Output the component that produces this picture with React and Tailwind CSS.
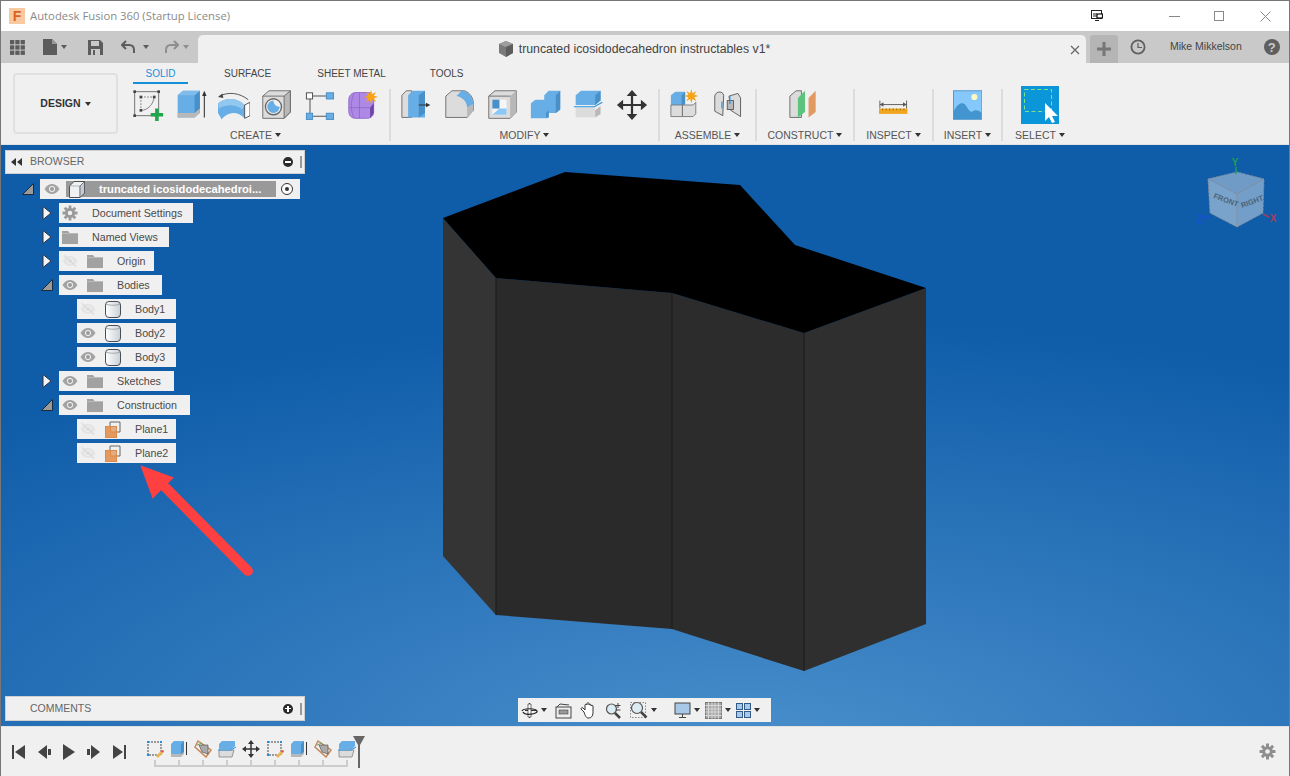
import React from 'react';

const Caret = ({ className = 'border-t-[#333]' }) => (
    <span className={`inline-block w-0 h-0 border-x-[3px] border-x-transparent border-t-[4px] ${className}`} />
);

const Eye = ({ off }) => (
    <svg width="16" height="12" viewBox="0 0 16 12" className="shrink-0">
        <path d="M0.500 6C3 2 5.500 1 8 1s5 1 7.500 5C13 10 10.500 11 8 11S3 10 0.500 6Z" fill={off ? '#e4e4e4' : '#a3a3a3'} />
        <circle cx="8" cy="6" r="3" fill="#f0f0f0" />
        <circle cx="8" cy="6" r="2" fill={off ? '#dcdcdc' : '#9a9a9a'} />
        {off && <path d="M2 0.500L14 11.500" stroke="#dcdcdc" strokeWidth="1.600" />}
    </svg>
);

const Folder = () => (
    <svg width="16" height="14" viewBox="0 0 16 14" className="shrink-0">
        <path d="M0 1h6l1.500 2H16v11H0Z" fill="#a2a2a2" />
        <path d="M0 3.500h16" stroke="#c4c4c4" strokeWidth="0.700" />
    </svg>
);

const Gear = ({ size = 16, color = '#9a9a9a' }) => (
    <svg width={size} height={size} viewBox="0 0 16 16" className="shrink-0">
        <path d="M8 3a5 5 0 1 0 0 10A5 5 0 0 0 8 3Zm0 2.800a2.200 2.200 0 1 1 0 4.400 2.200 2.200 0 0 1 0-4.400Z" fill={color} fillRule="evenodd" />
        <g stroke={color} strokeWidth="2.800">
            <path d="M8 0.500V4M8 12v3.500M0.500 8H4M12 8h3.500M2.700 2.700l2.500 2.500M10.800 10.800l2.500 2.500M13.300 2.700l-2.500 2.500M5.200 10.800l-2.500 2.500" />
        </g>
    </svg>
);

const BodyIcon = () => (
    <svg width="16" height="17" viewBox="0 0 16 17" className="shrink-0">
        <defs>
            <linearGradient id="cyl" x1="0" x2="1" y1="0" y2="0">
                <stop offset="0" stopColor="#ffffff" />
                <stop offset="1" stopColor="#c9d0d6" />
            </linearGradient>
        </defs>
        <rect x="0.500" y="0.500" width="15" height="16" rx="3.500" fill="url(#cyl)" stroke="#4a4f55" />
        <path d="M1 3.200c3 1.400 11 1.400 14 0" fill="none" stroke="#8a9097" strokeWidth="0.700" />
    </svg>
);

const PlaneIcon = () => (
    <svg width="16" height="17" viewBox="0 0 16 17" className="shrink-0">
        <path d="M5 5V1h10v10h-3" fill="none" stroke="#666" />
        <rect x="0.500" y="5.500" width="11" height="11" fill="#e0ab85" stroke="#dd8a4a" />
        <path d="M0.500 5.500h5v5.500h6v5.500h-11Z" fill="#e39a60" stroke="#dd8a4a" />
    </svg>
);

const RootCube = () => (
    <svg width="16" height="17" viewBox="0 0 16 17" className="shrink-0">
        <path d="M0.500 5L5 0.500h10.500V12L11 16.500H0.500Z" fill="#eef0f2" stroke="#4a4f55" />
        <path d="M0.500 5H11v11.500" fill="none" stroke="#9aa0a6" strokeWidth="0.700" />
        <path d="M11 5l4.500-4.500V12L11 16.500Z" fill="#c6ccd2" stroke="#4a4f55" strokeWidth="0.700" />
    </svg>
);

const Disclosure = ({ open }) => (
    <span className="w-[12px] h-[14px] flex items-center justify-center shrink-0">
        {open ? (
            <svg width="12" height="12" viewBox="0 0 12 12">
                <path d="M0.500 11.500L11.500 0.500V11.500Z" fill="#9a9a9a" stroke="#1c2a3a" />
            </svg>
        ) : (
            <svg width="10" height="14" viewBox="0 0 10 14">
                <path d="M1 0.500L9 7 1 13.500Z" fill="#f4f4f4" stroke="#2b3340" />
            </svg>
        )}
    </span>
);

const treeRows = [
    { label: 'Document Settings', indent: 'ml-[36px]', disc: 'closed', eye: null, icon: 'gear', width: 'w-[134px]' },
    { label: 'Named Views', indent: 'ml-[36px]', disc: 'closed', eye: null, icon: 'folder', width: 'w-[110px]' },
    { label: 'Origin', indent: 'ml-[36px]', disc: 'closed', eye: 'off', icon: 'folder', width: 'w-[95px]' },
    { label: 'Bodies', indent: 'ml-[36px]', disc: 'open', eye: 'on', icon: 'folder', width: 'w-[103px]' },
    { label: 'Body1', indent: 'ml-[72px]', disc: null, eye: 'off', icon: 'body', width: 'w-[99px]' },
    { label: 'Body2', indent: 'ml-[72px]', disc: null, eye: 'on', icon: 'body', width: 'w-[99px]' },
    { label: 'Body3', indent: 'ml-[72px]', disc: null, eye: 'on', icon: 'body', width: 'w-[99px]' },
    { label: 'Sketches', indent: 'ml-[36px]', disc: 'closed', eye: 'on', icon: 'folder', width: 'w-[115px]' },
    { label: 'Construction', indent: 'ml-[36px]', disc: 'open', eye: 'on', icon: 'folder', width: 'w-[131px]' },
    { label: 'Plane1', indent: 'ml-[72px]', disc: null, eye: 'off', icon: 'plane', width: 'w-[99px]' },
    { label: 'Plane2', indent: 'ml-[72px]', disc: null, eye: 'off', icon: 'plane', width: 'w-[99px]' },
];

const TreeRow = ({ row }) => (
    <div className={`flex items-center h-[20px] ${row.indent}`}>
        {row.disc && (
            <span className="w-[18px] -ml-[18px] flex justify-start">
                <Disclosure open={row.disc === 'open'} />
            </span>
        )}
        <div className={`flex items-center h-[20px] bg-[#f0f0f0] pl-[3px] ${row.width}`}>
            {row.eye && <span className="w-[25px] shrink-0"><Eye off={row.eye === 'off'} /></span>}
            <span className="w-[30px] shrink-0 flex">
                {row.icon === 'gear' && <Gear />}
                {row.icon === 'folder' && <Folder />}
                {row.icon === 'body' && <BodyIcon />}
                {row.icon === 'plane' && <PlaneIcon />}
            </span>
            <span className="text-[10.700px] text-[#4a4a4a] whitespace-nowrap">{row.label}</span>
        </div>
    </div>
);

const Sep = () => <div className="w-[2px] h-[52px] mt-[3px] bg-[#dcdcdc] shrink-0" />;

const Group = ({ label, width, children }) => (
    <div className={`flex flex-col items-center shrink-0 ${width}`}>
        <div className="flex items-center h-[38px] gap-[11px]">{children}</div>
        <div className="flex items-center gap-[3px] h-[14px] mt-[4px] text-[10.500px] text-[#555] leading-none whitespace-nowrap">
            {label} <Caret />
        </div>
    </div>
);

const Ico = ({ w = 36, children }) => (
    <svg width={(w * 8) / 9} height="32" viewBox={`0 0 ${w} 36`} className="shrink-0">{children}</svg>
);

const BLUE = '#68aee6';
const BLUE_D = '#4a90c8';
const GR = '#dcdcdc';
const GR_D = '#b8b8b8';

const SketchIcon = () => (
    <Ico>
        <path d="M3 3h27v27H3Z" fill="none" stroke="#666" />
        <path d="M10 9h15M10 9v15" stroke="#777" strokeDasharray="2 1.500" fill="none" />
        <path d="M10 24c8 0 14-7 15-15" fill="none" stroke="#777" />
        {[[3, 3], [30, 3], [3, 30], [10, 9], [25, 9], [10, 24]].map(([x, y]) => (
            <rect key={`${x}-${y}`} x={x - 1.500} y={y - 1.500} width="3" height="3" fill="#444" />
        ))}
        <path d="M21 27h5v-5h4v5h5v4h-5v5h-4v-5h-5Z" fill="#1fa64a" />
    </Ico>
);

const ExtrudeIcon = () => (
    <Ico>
        <path d="M3 7l6-5h19v25l-6 5H3Z" fill={BLUE} />
        <path d="M22 7l6-5v23l-6 6Z" fill={BLUE_D} />
        <path d="M3 7l6-5h19l-6 5Z" fill="#7fbcec" />
        <path d="M3 27h19l6-5v5l-6 5H3Z" fill={GR_D} />
        <path d="M33 32V4" stroke="#333" strokeWidth="1.200" />
        <path d="M30.500 8L33 2l2.500 6Z" fill="#333" />
    </Ico>
);

const RevolveIcon = () => (
    <Ico>
        <path d="M0 16C8 10 21 9 30 18V33C22 25 12 25 4 34L0 27Z" fill={BLUE} />
        <path d="M0 16C8 10 21 9 30 18L27 23C20 17 9 17 1 22Z" fill="#92c7f0" />
        <path d="M30 18L36 15V30L30 33Z" fill="#fff" stroke="#444" />
        <path d="M2 8C11 3 24 4 34 12" fill="none" stroke="#444" />
        <path d="M0 9L5 5 6 10Z" fill="#444" />
    </Ico>
);

const HoleIcon = () => (
    <Ico>
        <path d="M2 8l7-6h24v24l-7 7H2Z" fill={GR} stroke="#666" />
        <path d="M26 8l7-6v24l-7 7Z" fill={GR_D} stroke="#666" />
        <path d="M2 8h24" stroke="#666" />
        <circle cx="14" cy="20" r="9" fill="#f0f0f0" stroke="#666" strokeWidth="1.500" />
        <path d="M14 13a7 7 0 1 0 7 7c-4 0-7-3-7-7Z" fill={BLUE} />
    </Ico>
);

const BoxIcon = () => (
    <Ico>
        <g transform="translate(1 2) scale(1.150)">
            <path d="M8 5h14M5 8v14M8 25h14" stroke="#555" />
            <rect x="1.500" y="2" width="6" height="6" fill="#fff" stroke="#555" />
            <rect x="21" y="2" width="7" height="6" fill={BLUE} stroke="#4a90c8" />
            <rect x="1.500" y="22" width="6" height="6" fill={BLUE} stroke="#4a90c8" />
            <rect x="21" y="22" width="7" height="6" fill={BLUE} stroke="#4a90c8" />
        </g>
    </Ico>
);

const Star = ({ cx, cy, r = 7 }) => {
    const pts = [];
    for (let i = 0; i < 16; i++) {
        const rad = i % 2 === 0 ? r : r * 0.45;
        const a = (i * Math.PI) / 8;
        pts.push(`${(cx + Math.cos(a) * rad).toFixed(1)},${(cy + Math.sin(a) * rad).toFixed(1)}`);
    }
    return <polygon points={pts.join(' ')} fill="#f5a418" />;
};

const FormIcon = () => (
    <Ico>
        <path d="M2 12c0-5 4-8 8-8h14c4 0 6 4 6 8v14c0 5-4 7-8 7H10c-5 0-8-3-8-8Z" fill="#ad88e4" stroke="#8f66cc" />
        <path d="M2 21h24M14 5v28M8 5c-4 6-4 22 0 27" fill="none" stroke="#8a62c0" strokeWidth="0.800" />
        <path d="M30 16v11l-4 6v-12Z" fill="#6f44a8" />
        <Star cx={27} cy={9} r={8} />
    </Ico>
);

const PressPullIcon = () => (
    <Ico>
        <path d="M1 7l5-5h6v30H1Z" fill={GR} stroke="#666" />
        <path d="M8 7l5-5h14v30H8Z" fill={BLUE} />
        <path d="M20 7l7-5v25l-7 5Z" fill={BLUE_D} />
        <path d="M20 18h10" stroke="#333" strokeWidth="1.200" />
        <path d="M28 15.500l5 2.500-5 2.500Z" fill="#333" />
    </Ico>
);

const FilletIcon = () => (
    <Ico>
        <path d="M2 8l7-6h14c6 2 10 8 10 14v8l-7 8H2Z" fill={GR} stroke="#666" />
        <path d="M14 8l6-6h2c6 2 11 8 11 15l-7 4c0-6-5-12-12-13Z" fill={BLUE} />
        <path d="M26 21l7-4v8l-7 7Z" fill={GR_D} />
    </Ico>
);

const ShellIcon = () => (
    <Ico>
        <path d="M2 8l7-6h24v24l-7 7H2Z" fill={GR} stroke="#666" />
        <path d="M26 8l7-6v24l-7 7Z" fill={GR_D} />
        <path d="M2 8h24" stroke="#666" />
        <rect x="6" y="12" width="16" height="17" fill="#f6f6f6" />
        <path d="M6 12h8v10H6Z" fill={BLUE_D} />
        <path d="M14 22h8v7H6Z" fill="#8cc8f5" />
    </Ico>
);

const CombineIcon = () => (
    <Ico>
        <path d="M1 16l5-4h10V7l5-5h13v21l-5 4h-8v5l-2 1H1Z" fill={BLUE} />
        <path d="M29 7l5-5v21l-5 4ZM18 27l3-3v8h-3Z" fill={BLUE_D} />
    </Ico>
);

const SplitIcon = () => (
    <Ico>
        <path d="M3 7l6-5h22v11l-6 5H3Z" fill={BLUE} />
        <path d="M25 7l6-5v11l-6 5Z" fill={BLUE_D} />
        <path d="M3 21h22v11H3Z" fill={GR} />
        <path d="M25 24l6-5v9l-6 4Z" fill={GR_D} />
        <path d="M1 20h23l9-5" fill="none" stroke="#1e8fe0" strokeWidth="1.200" />
    </Ico>
);

const MoveIcon = () => (
    <Ico>
        <path d="M18 4v28M4 18h28" stroke="#333" strokeWidth="2.500" />
        <path d="M18 1l6 7H12ZM18 35l-6-7h12ZM1 18l7-6v12ZM35 18l-7 6V12Z" fill="#333" />
    </Ico>
);

const NewComponentIcon = () => (
    <Ico>
        <path d="M1 7l5-4h11v15H1Z" fill={BLUE} />
        <path d="M13 7l4-4v14l-4 1Z" fill={BLUE_D} />
        <path d="M1 18h13v13H1ZM14 18h12l3-3v13l-3 3H14Z" fill={GR} stroke="#777" />
        <Star cx={24} cy={8} r={8} />
    </Ico>
);

const JointIcon = () => (
    <Ico>
        <path d="M2 8c1-6 9-6 10-1l-1 23-9-5Z" fill={GR} stroke="#555" />
        <path d="M18 8l10-3 3 5v21l-11-7Z" fill={GR} stroke="#555" />
        <rect x="16" y="13" width="7" height="10" fill="#b8b8b8" stroke="#555" />
        <path d="M10 14v8M19 8v9" stroke="#1e8fe0" strokeWidth="1.200" />
    </Ico>
);

const ConstructIcon = () => (
    <Ico>
        <path d="M1 8l7-6h6v30H1Z" fill={GR} stroke="#666" />
        <path d="M10 10l8-8v24l-8 6Z" fill="#5cc47c" />
        <path d="M22 10l8-8v24l-8 6Z" fill="#e39a60" />
    </Ico>
);

const InspectIcon = () => (
    <Ico w={32}>
        <path d="M1 13v9M31 13v9" stroke="#555" />
        <path d="M1 17.500h30" stroke="#555" />
        <path d="M1 17.500l4-2.500v5ZM31 17.500l-4-2.500v5Z" fill="#555" />
        <rect x="0" y="22" width="32" height="6" fill="#f2a51e" />
        <path d="M4 22v2M8 22v2M12 22v2M16 22v2M20 22v2M24 22v2M28 22v2" stroke="#8a6510" />
    </Ico>
);

const InsertIcon = () => (
    <Ico w={33}>
        <rect x="0.500" y="2" width="32" height="32" fill="#85c8fb" stroke="#4a90c8" />
        <circle cx="24" cy="9" r="3.500" fill="#fdf7c4" />
        <path d="M1 34V25c4-9 10-11 13-7 2 3 4 7 7 8 3-3 8-3 11 1v7Z" fill="#4295cf" />
    </Ico>
);

const SelectIcon = () => (
    <svg width="38" height="38" viewBox="0 0 38 38" className="shrink-0">
        <rect width="38" height="38" fill="#0b96da" />
        <rect x="3.500" y="3.500" width="27" height="22" fill="none" stroke="#7ee08a" strokeDasharray="4 2.500" />
        <path d="M24 17v18l4-4 3 6 3-1-3-6h6Z" fill="#fff" />
    </svg>
);

const TlSketch = () => (
    <svg width="18" height="18" viewBox="0 0 18 18">
        <rect x="2" y="2" width="13" height="13" fill="none" stroke="#444" strokeDasharray="2 1" />
        <path d="M1 1h2v2H1ZM14 1h2v2h-2ZM1 14h2v2H1Z" fill="#1e8fe0" />
        <path d="M10 16l5-5 2 2-5 5Z" fill="#e8b54a" />
        <path d="M15 11l2 2 1-2-1-1Z" fill="#e64646" />
    </svg>
);
const TlExtrude = () => (
    <svg width="18" height="18" viewBox="0 0 18 18">
        <path d="M1 4l3-3h10v12l-3 3H1Z" fill={BLUE} />
        <path d="M11 4l3-3v12l-3 3Z" fill={BLUE_D} />
        <path d="M1 14h10l3-2v2l-3 3H1Z" fill={GR_D} />
        <path d="M16.500 15V2" stroke="#333" />
    </svg>
);
const TlFace = () => (
    <svg width="18" height="18" viewBox="0 0 18 18">
        <path d="M4 1l13 9-5 7L1 7Z" fill="#f0f0f0" stroke="#c8895a" strokeWidth="1.500" />
        <path d="M5 5l9 0 0 9-6-2Z" fill="#aaa" stroke="#444" strokeWidth="0.600" />
        <path d="M3 5l5-2" stroke="#4cb46a" />
    </svg>
);
const TlSplit = () => (
    <svg width="18" height="18" viewBox="0 0 18 18">
        <path d="M1 4l3-3h13v5l-3 3H1Z" fill={BLUE} />
        <path d="M1 10h15l-2 7H1Z" fill={GR} stroke="#777" strokeWidth="0.700" />
        <path d="M0 10h13l5-3" fill="none" stroke="#1e8fe0" />
    </svg>
);
const TlMove = () => (
    <svg width="18" height="18" viewBox="0 0 18 18">
        <path d="M9 2v14M2 9h14" stroke="#333" strokeWidth="1.500" />
        <path d="M9 0l3 4H6ZM9 18l-3-4h6ZM0 9l4-3v6ZM18 9l-4 3V6Z" fill="#333" />
    </svg>
);

const timeline = [TlSketch, TlExtrude, TlFace, TlSplit, TlMove, TlSketch, TlExtrude, TlFace, TlSplit];

const NavBtn = ({ children, caret }) => (
    <div className="flex items-center gap-[3px]">
        {children}
        {caret && <Caret />}
    </div>
);

const App = () => {
    return (
        <div
            className="w-[1290px] h-[776px] flex flex-col overflow-hidden border-x border-t border-[#777] bg-white"
            style={{ fontFamily: '"Liberation Sans", Arial, sans-serif' }}
        >
            {/* title bar */}
            <div className="h-[30px] shrink-0 bg-white flex items-center pl-[8px] relative">
                <div className="w-[16px] h-[16px] flex items-center justify-center bg-[#f9c9a0] text-[#d9641e] font-bold text-[14px] leading-none">
                    F
                </div>
                <span className="ml-[5px] text-[11.300px] text-[#8a8a8a] whitespace-nowrap" style={{ fontFamily: '"Open Sans", sans-serif' }}>
                    Autodesk Fusion 360 (Startup License)
                </span>
                <div className="ml-auto flex items-center">
                    <svg width="12" height="12" viewBox="0 0 12 12" className="mr-[66px]">
                        <rect x="0.500" y="0.500" width="10" height="8" fill="#fff" stroke="#222" />
                        <path d="M3 3v4M5 3v4" stroke="#222" />
                        <rect x="6" y="4" width="5.500" height="4" fill="#fff" stroke="#111" strokeWidth="1.200" />
                        <path d="M4 10.500h4" stroke="#222" />
                    </svg>
                    <span className="w-[11px] h-px bg-[#888] mr-[34px]" />
                    <span className="w-[10px] h-[10px] border border-[#888] mr-[36px]" />
                    <svg width="11" height="11" viewBox="0 0 11 11" className="mr-[18px]">
                        <path d="M0.500 0.500l10 10M10.500 0.500l-10 10" stroke="#888" />
                    </svg>
                </div>
            </div>

            {/* tab bar */}
            <div className="h-[32px] shrink-0 bg-[#c9c9c9] flex items-end">
                <div className="w-[197px] h-full flex items-center pl-[9px] shrink-0">
                    <svg width="15" height="15" viewBox="0 0 15 15" fill="#5c5c5c">
                        {[0, 5.300, 10.600].map((y) => [0, 5.300, 10.600].map((x) => (
                            <rect key={`${x}-${y}`} x={x} y={y} width="4.300" height="4.300" />
                        )))}
                    </svg>
                    <svg width="14" height="16" viewBox="0 0 14 16" className="ml-[18px]">
                        <path d="M0 0h9l5 5v11H0Z" fill="#5c5c5c" />
                        <path d="M9 0v5h5" fill="#999" />
                    </svg>
                    <span className="ml-[4px] flex"><Caret className="border-t-[#5c5c5c]" /></span>
                    <svg width="15" height="15" viewBox="0 0 15 15" className="ml-[21px]">
                        <path d="M0 0h12l3 3v12H0Z" fill="#5c5c5c" />
                        <rect x="3" y="1" width="8" height="5" fill="#c9c9c9" />
                        <rect x="3" y="9" width="9" height="6" fill="#c9c9c9" />
                        <rect x="5" y="10" width="2" height="5" fill="#5c5c5c" />
                    </svg>
                    <svg width="14" height="14" viewBox="0 0 14 14" className="ml-[18px]">
                        <path d="M5 1L1 5l4 4M1 5h7c3 0 5 2 5 5v3" fill="none" stroke="#5c5c5c" strokeWidth="2" />
                    </svg>
                    <span className="ml-[8px] flex"><Caret className="border-t-[#5c5c5c]" /></span>
                    <svg width="14" height="14" viewBox="0 0 14 14" className="ml-[16px]">
                        <path d="M9 1l4 4-4 4M13 5H6C3 5 1 7 1 10v3" fill="none" stroke="#8e8e8e" strokeWidth="2" />
                    </svg>
                    <span className="ml-[4px] flex"><Caret className="border-t-[#8e8e8e]" /></span>
                </div>
                <div className="w-[888px] h-[28px] shrink-0 bg-[#f0f0f0] rounded-t-[5px] flex items-center justify-center relative">
                    <svg width="16" height="16" viewBox="0 0 16 16" className="mr-[5px]">
                        <path d="M1 3l7-3 7 3v9l-7 4-7-4Z" fill="#7a7a7a" />
                        <path d="M1 3l7 3 7-3-7-3Z" fill="#9e9e9e" />
                        <path d="M8 6l7-3v9l-7 4Z" fill="#5d5d5d" />
                    </svg>
                    <span className="text-[12.300px] text-[#444] whitespace-nowrap pr-[16px]">truncated icosidodecahedron instructables v1*</span>
                    <svg width="10" height="10" viewBox="0 0 10 10" className="absolute right-[6px] top-[10px]">
                        <path d="M1 1l8 8M9 1l-8 8" stroke="#666" strokeWidth="1.200" />
                    </svg>
                </div>
                <div className="ml-[4px] w-[28px] h-[28px] rounded-t-[3px] bg-[#b5b5b5] flex items-center justify-center shrink-0">
                    <svg width="14" height="14" viewBox="0 0 14 14">
                        <path d="M7 0v14M0 7h14" stroke="#777" strokeWidth="3" />
                    </svg>
                </div>
                <div className="h-full flex items-center flex-1">
                    <svg width="16" height="16" viewBox="0 0 16 16" className="ml-[12px]">
                        <circle cx="8" cy="8" r="7.500" fill="#5f5f5f" />
                        <circle cx="8" cy="8" r="5.700" fill="#c9c9c9" />
                        <path d="M8 4v4.500h4" fill="none" stroke="#5f5f5f" strokeWidth="1.200" />
                    </svg>
                    <span className="ml-[24px] text-[10.500px] text-[#444] whitespace-nowrap">Mike Mikkelson</span>
                    <span className="ml-[22px] w-[16px] h-[16px] rounded-full bg-[#5f5f5f] text-[#c9c9c9] text-[13px] font-bold leading-none flex items-center justify-center">?</span>
                </div>
            </div>

            {/* ribbon */}
            <div className="h-[82px] shrink-0 bg-[#f0f0f0] flex border-b border-[#e2e2e2] pt-[10px]">
                <div className="ml-[12px] w-[105px] h-[61px] shrink-0 rounded-[4px] border-2 border-[#e0e0e0] flex items-center justify-center gap-[4px] text-[10.500px] font-bold text-[#333]">
                    DESIGN <Caret />
                </div>
                <div className="flex flex-col">
                    <div className="flex h-[13px] ml-[15px] text-[10px] text-[#444] leading-[0px] items-start pt-[1px] relative">
                        <span className="w-[55px] text-center text-[#1490d8]">SOLID</span>
                        <span className="ml-[36px] whitespace-nowrap">SURFACE</span>
                        <span className="ml-[46px] whitespace-nowrap">SHEET METAL</span>
                        <span className="ml-[44px] whitespace-nowrap">TOOLS</span>
                        <span className="absolute left-0 top-[9px] w-[55px] h-[2px] bg-[#1490d8]" />
                    </div>
                    <div className="flex items-start gap-[10px] ml-[14px]">
                        <Group label="CREATE" width="w-[247px]"><SketchIcon /><ExtrudeIcon /><RevolveIcon /><HoleIcon /><BoxIcon /><FormIcon /></Group>
                        <Sep />
                        <Group label="MODIFY" width="w-[247px]"><PressPullIcon /><FilletIcon /><ShellIcon /><CombineIcon /><SplitIcon /><MoveIcon /></Group>
                        <Sep />
                        <Group label="ASSEMBLE" width="w-[75px]"><NewComponentIcon /><JointIcon /></Group>
                        <Sep />
                        <Group label="CONSTRUCT" width="w-[76px]"><ConstructIcon /></Group>
                        <Sep />
                        <Group label="INSPECT" width="w-[57px]"><InspectIcon /></Group>
                        <Sep />
                        <Group label="INSERT" width="w-[47px]"><InsertIcon /></Group>
                        <Sep />
                        <Group label="SELECT" width="w-[54px]"><SelectIcon /></Group>
                    </div>
                </div>
            </div>

            {/* canvas */}
            <div className="relative flex-1 min-h-0 flex flex-col justify-between py-[5px] bg-[radial-gradient(ellipse_90%_75%_at_58%_105%,#4a90cc_0%,#2f78bc_45%,#0f5ca9_100%)]">
                <svg width="1288" height="580" viewBox="1 145 1288 580" className="absolute left-0 top-0">
                    <path d="M443 218L496 278V615L443 556Z" fill="#343434" />
                    <path d="M496 278L672 293V629L496 615Z" fill="#2a2a2a" />
                    <path d="M672 293L804 333V671L672 629Z" fill="#2c2c2c" />
                    <path d="M804 333L926 288V624L804 671Z" fill="#2f2f2f" />
                    <path d="M496 278V615M672 293V629M804 333V671" stroke="#1a1a1a" strokeWidth="1" />
                    <path d="M443 218L565 172L740 185L795 245L926 288L804 333L672 293L496 278Z" fill="#000" />
                    <path d="M248 571L166 488" stroke="#ff4040" strokeWidth="10" strokeLinecap="round" fill="none" />
                    <path d="M142 467L172 478L153 497Z" fill="#ff4040" stroke="#ff4040" strokeWidth="2" />
                </svg>

                {/* view cube */}
                <svg width="100" height="90" viewBox="1190 150 100 90" className="absolute left-[1189px] top-[5px]">
                    <path d="M1208 179L1237 172 1264 179 1237 194Z" fill="#6f9bc6" stroke="#8c8f96" strokeDasharray="3 1" strokeWidth="0.700" />
                    <path d="M1208 179L1237 194V227L1210 213Z" fill="#7aa3cb" stroke="#8c8f96" strokeDasharray="3 1" strokeWidth="0.700" />
                    <path d="M1237 194L1264 179 1263 213 1237 227Z" fill="#739ec9" stroke="#8c8f96" strokeDasharray="3 1" strokeWidth="0.700" />
                    <path d="M1236 167v7" stroke="#1ea054" strokeWidth="1.500" />
                    <path d="M1204 218l6-2" stroke="#1850d8" strokeWidth="1.500" />
                    <path d="M1263 214l6 3" stroke="#a04060" strokeWidth="1.500" />
                    <text x="1235" y="166" fontSize="10" fill="#1ea054" fontWeight="bold" textAnchor="middle">Y</text>
                    <text x="1200" y="223" fontSize="11" fill="#1850d8" fontWeight="bold" textAnchor="middle">Z</text>
                    <text x="1273" y="222" fontSize="10" fill="#a04060" fontWeight="bold" textAnchor="middle">X</text>
                    <text x="1213" y="198" fontSize="7.500" fill="#4d6478" fontWeight="bold" transform="rotate(20 1213 198)">FRONT</text>
                    <text x="1242" y="208" fontSize="7.500" fill="#4d6478" fontWeight="bold" transform="rotate(-20 1242 208)">RIGHT</text>
                </svg>

                <div className="relative flex flex-col">
                    <div className="ml-[4px] w-[300px] h-[24px] bg-[#f0f0f0] border border-[#d0d0d0] flex items-center pl-[5px] pr-[2px] text-[10.500px] text-[#666]">
                        <svg width="11" height="8" viewBox="0 0 11 8">
                            <path d="M5 0v8L0 4ZM11 0v8L6 4Z" fill="#333" />
                        </svg>
                        <span className="ml-[8px]">BROWSER</span>
                        <span className="ml-auto w-[10px] h-[10px] rounded-full bg-[#2b2b2b] flex items-center justify-center">
                            <span className="w-[6px] h-[1.500px] bg-white" />
                        </span>
                        <span className="ml-[7px] w-[2px] h-[12px] border-x border-[#999]" />
                    </div>
                    <div className="flex flex-col gap-[4px] mt-[5px]">
                        <div className="flex items-center h-[20px] ml-[21px]">
                            <span className="w-[18px]"><Disclosure open /></span>
                            <div className="w-[260px] h-[20px] bg-[#f0f0f0] flex items-center pl-[4px]">
                                <span className="w-[22px]"><Eye /></span>
                                <div className="flex items-center w-[210px] h-[16px] bg-[#999] pl-[3px]">
                                    <RootCube />
                                    <span className="ml-[14px] text-[11.200px] font-bold text-white whitespace-nowrap">truncated icosidodecahedroi...</span>
                                </div>
                                <svg width="14" height="14" viewBox="0 0 14 14" className="ml-[4px]">
                                    <circle cx="7" cy="7" r="5.500" fill="#fff" stroke="#333" />
                                    <circle cx="7" cy="7" r="2" fill="#333" />
                                </svg>
                            </div>
                        </div>
                        {treeRows.map((row) => (
                            <div key={row.label} className={row.indent === 'ml-[36px]' ? 'pl-[22px]' : 'pl-[4px]'}>
                                <TreeRow row={row} />
                            </div>
                        ))}
                    </div>
                </div>

                <div className="relative flex items-end">
                    <div className="ml-[4px] w-[300px] h-[25px] bg-[#f0f0f0] border border-[#d0d0d0] flex items-center pl-[24px] pr-[2px] text-[10.500px] text-[#666]">
                        <span>COMMENTS</span>
                        <span className="ml-auto w-[10px] h-[10px] rounded-full bg-[#2b2b2b] flex items-center justify-center relative">
                            <span className="w-[6px] h-[1.500px] bg-white" />
                            <span className="absolute w-[1.500px] h-[6px] bg-white" />
                        </span>
                        <span className="ml-[7px] w-[2px] h-[12px] border-x border-[#999]" />
                    </div>
                </div>

                {/* nav bar */}
                <div className="absolute left-[517px] bottom-[4px] w-[253px] h-[24px] bg-[#f0f0f0] flex items-center pl-[3px] gap-[8px]">
                    <NavBtn caret>
                        <svg width="17" height="17" viewBox="0 0 17 17">
                            <path d="M8.500 1v15M4 8.500h11" stroke="#333" fill="none" />
                            <path d="M7 2h3v13H7Z" fill="#fff" stroke="#333" strokeWidth="0.700" />
                            <path d="M1 9c1-3 14-3 15 0s-12 5-14 1" fill="none" stroke="#222" strokeWidth="1.200" />
                        </svg>
                    </NavBtn>
                    <NavBtn>
                        <svg width="17" height="17" viewBox="0 0 17 17">
                            <rect x="1" y="5" width="15" height="11" fill="#eee" stroke="#444" />
                            <rect x="4" y="8" width="9" height="4" fill="#999" stroke="#444" strokeWidth="0.600" />
                            <path d="M2 5l3-3 9 1" fill="none" stroke="#444" />
                        </svg>
                    </NavBtn>
                    <NavBtn>
                        <svg width="17" height="17" viewBox="0 0 17 17">
                            <path d="M4 10L1 7c0-1 1-2 2-1l2 2V3c0-1 2-1 2 0V1.500c0-1 2-1 2 0V3c0-1 2-1 2 0v1c0-1 2-1 2 0v7c0 3-2 5-4 5H8c-2 0-3-3-4-6Z" fill="#fff" stroke="#333" />
                        </svg>
                    </NavBtn>
                    <NavBtn>
                        <svg width="17" height="17" viewBox="0 0 17 17">
                            <circle cx="6.500" cy="7" r="5" fill="#dcecf5" stroke="#555" strokeWidth="1.200" />
                            <path d="M10 11l5 5" stroke="#444" strokeWidth="2.500" />
                            <path d="M13 1v5M10.500 3.500h5M10.500 8h5" stroke="#444" />
                        </svg>
                    </NavBtn>
                    <NavBtn caret>
                        <svg width="18" height="18" viewBox="0 0 18 18">
                            <rect x="0.500" y="1.500" width="15" height="15" fill="none" stroke="#888" strokeDasharray="1.500 1.500" />
                            <circle cx="7" cy="7" r="5.500" fill="#dcecf5" stroke="#555" strokeWidth="1.200" />
                            <path d="M11 11l5.500 5.500" stroke="#444" strokeWidth="2.500" />
                        </svg>
                    </NavBtn>
                    <span className="ml-[6px]" />
                    <NavBtn caret>
                        <svg width="17" height="17" viewBox="0 0 17 17" className="-ml-[5px]">
                            <rect x="1" y="1" width="15" height="11" fill="#a8c8e8" stroke="#444" />
                            <path d="M8.500 12v3M5 15.500h7" stroke="#444" />
                        </svg>
                    </NavBtn>
                    <NavBtn caret>
                        <svg width="17" height="17" viewBox="0 0 17 17" className="-ml-[3px]">
                            <rect x="0.500" y="0.500" width="16" height="16" fill="#aaa" stroke="#777" />
                            <path d="M3.500 0v17M7 0v17M10 0v17M13.500 0v17M0 3.500h17M0 7h17M0 10h17M0 13.500h17" stroke="#eee" strokeWidth="0.600" />
                        </svg>
                    </NavBtn>
                    <NavBtn caret>
                        <svg width="15" height="15" viewBox="0 0 15 15" className="-ml-[3px]">
                            <rect x="0.500" y="0.500" width="6" height="6" fill="#a8c8e8" stroke="#345b86" />
                            <rect x="8.500" y="0.500" width="6" height="6" fill="#a8c8e8" stroke="#345b86" />
                            <rect x="0.500" y="8.500" width="6" height="6" fill="#a8c8e8" stroke="#345b86" />
                            <rect x="8.500" y="8.500" width="6" height="6" fill="#a8c8e8" stroke="#345b86" />
                        </svg>
                    </NavBtn>
                </div>
            </div>

            {/* timeline */}
            <div className="h-[50px] shrink-0 bg-[#f0f0f0] border-t border-[#e0e0e0] flex items-center pl-[11px] relative">
                <div className="flex items-center gap-[11px]">
                    <svg width="13" height="14" viewBox="0 0 13 14" fill="#444"><rect width="2" height="14" /><path d="M13 0v14L3 7Z" /></svg>
                    <svg width="14" height="14" viewBox="0 0 14 14" fill="#444" className="ml-[2px]"><path d="M9 0v14L0 7Z" /><rect x="10" y="4" width="3" height="6" /></svg>
                    <svg width="12" height="16" viewBox="0 0 12 16" fill="#444"><path d="M0 0l12 8-12 8Z" /></svg>
                    <svg width="14" height="14" viewBox="0 0 14 14" fill="#444"><rect x="1" y="4" width="3" height="6" /><path d="M5 0v14l9-7Z" /></svg>
                    <svg width="13" height="14" viewBox="0 0 13 14" fill="#444" className="ml-[2px]"><path d="M0 0v14l10-7Z" /><rect x="11" width="2" height="14" /></svg>
                </div>
                <div className="ml-[20px] relative flex gap-[6px] -mt-[5px]">
                    {timeline.map((Item, i) => (
                        <div key={i} className="w-[18px] h-[18px] shrink-0 relative">
                            <Item />
                            <span className="absolute left-[8px] top-[20px] w-[2px] h-[6px] bg-[#ccc]" />
                        </div>
                    ))}
                    <div className="absolute left-[8px] right-[8px] top-[25px] h-[2px] bg-[#ccc]" />
                </div>
                <svg width="12" height="32" viewBox="0 0 12 32" className="absolute left-[352px] top-[9px]">
                    <path d="M0 0h12L7 9v23H5V9Z" fill="#666" />
                </svg>
                <span className="ml-auto mr-[13px]"><Gear size={17} color="#8e8e8e" /></span>
            </div>
        </div>
    );
};

export default App;
